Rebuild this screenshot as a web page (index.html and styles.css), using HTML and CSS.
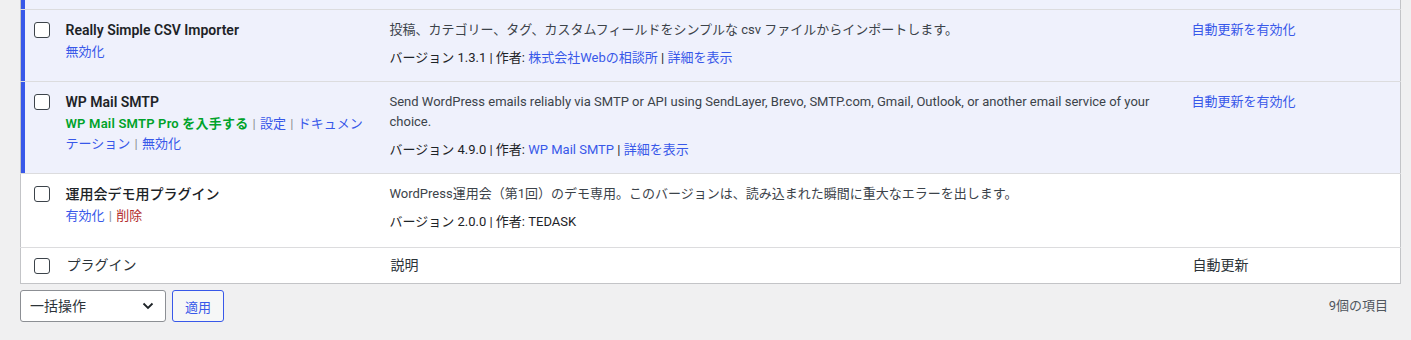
FILE: index.html
```html
<!DOCTYPE html>
<html lang="ja">
<head>
    <meta charset="UTF-8">
    <meta name="viewport" content="width=device-width, initial-scale=1.0">
    <title>プラグイン</title>
    <link rel="stylesheet" href="styles.css">
</head>
<body>
    <div class="wrap">
        <table class="plugins">
            <colgroup>
                <col class="col-check">
                <col class="col-name">
                <col>
                <col class="col-auto">
            </colgroup>
            <tbody>
                <tr class="active spacer">
                    <th class="check-column"></th>
                    <td></td>
                    <td></td>
                    <td></td>
                </tr>
                <tr class="active">
                    <th class="check-column"><span class="checkbox"></span></th>
                    <td class="plugin-title">
                        <strong>Really Simple CSV Importer</strong>
                        <div class="row-actions"><a href="#">無効化</a></div>
                    </td>
                    <td class="column-description">
                        <p class="desc">投稿、カテゴリー、タグ、カスタムフィールドをシンプルな csv ファイルからインポートします。</p>
                        <p class="meta">バージョン 1.3.1 | 作者: <a href="#">株式会社Webの相談所</a> | <a href="#">詳細を表示</a></p>
                    </td>
                    <td class="column-auto-updates"><a href="#">自動更新を有効化</a></td>
                </tr>
                <tr class="active">
                    <th class="check-column"><span class="checkbox"></span></th>
                    <td class="plugin-title">
                        <strong>WP Mail SMTP</strong>
                        <div class="row-actions"><a href="#" class="get-pro">WP Mail SMTP Pro を入手する</a> <span class="sep">|</span> <a href="#">設定</a> <span class="sep">|</span> <a href="#">ドキュメンテーション</a> <span class="sep">|</span> <a href="#">無効化</a></div>
                    </td>
                    <td class="column-description">
                        <p class="desc">Send WordPress emails reliably via SMTP or API using SendLayer, Brevo, SMTP.com, Gmail, Outlook, or another email service of your choice.</p>
                        <p class="meta">バージョン 4.9.0 | 作者: <a href="#">WP Mail SMTP</a> | <a href="#">詳細を表示</a></p>
                    </td>
                    <td class="column-auto-updates"><a href="#">自動更新を有効化</a></td>
                </tr>
                <tr class="inactive">
                    <th class="check-column"><span class="checkbox"></span></th>
                    <td class="plugin-title">
                        <strong class="title-ja">運用会デモ用プラグイン</strong>
                        <div class="row-actions"><a href="#">有効化</a> <span class="sep">|</span> <a href="#" class="delete">削除</a></div>
                    </td>
                    <td class="column-description">
                        <p class="desc">WordPress運用会（第1回）のデモ専用。このバージョンは、読み込まれた瞬間に重大なエラーを出します。</p>
                        <p class="meta">バージョン 2.0.0 | 作者: TEDASK</p>
                    </td>
                    <td class="column-auto-updates"></td>
                </tr>
            </tbody>
            <tfoot>
                <tr>
                    <th class="check-column"><span class="checkbox"></span></th>
                    <th>プラグイン</th>
                    <th>説明</th>
                    <th>自動更新</th>
                </tr>
            </tfoot>
        </table>

        <div class="tablenav">
            <div class="bulkactions">
                <div class="select-wrap">
                    <select class="bulk-select">
                        <option>一括操作</option>
                    </select>
                    <svg class="chevron" width="12" height="8" viewBox="0 0 12 8"><path d="M1.5 1.5 L6 6 L10.5 1.5" fill="none" stroke="#1d2327" stroke-width="1.8"/></svg>
                </div>
                <button class="button">適用</button>
            </div>
            <span class="displaying-num">9個の項目</span>
        </div>
    </div>
</body>
</html>
```

FILE: styles.css
```css
body {
    margin: 0;
    background-color: #f0f0f1;
    color: #3c434a;
    font-family: Roboto, "Noto Sans CJK JP", sans-serif;
    font-size: 13px;
    line-height: 20px;
}

.wrap {
    padding: 0 10px 0 20px;
}

a {
    color: #3858e9;
    text-decoration: none;
}

.plugins {
    width: 100%;
    border-collapse: collapse;
    border: 1px solid #c3c4c7;
    border-top: none;
    background-color: #fff;
    table-layout: fixed;
}

.col-check {
    width: 35px;
}

.col-name {
    width: 324px;
}

.col-auto {
    width: 219px;
}

.plugins th,
.plugins td {
    text-align: left;
    vertical-align: top;
    padding: 10px 10px 13px;
}

.plugins tbody tr {
    border-bottom: 1px solid #dcdcde;
}

.plugins tr.active th,
.plugins tr.active td {
    background-color: #eff1fc;
}

.plugins tr.active .check-column {
    box-shadow: inset 4px 0 0 #3858e9;
}

.plugins tr.inactive td {
    padding-bottom: 15px;
}

.check-column {
    padding: 12px 0 0 13px !important;
}

.plugins tr.spacer th,
.plugins tr.spacer td {
    padding: 0 !important;
    height: 9px;
}

.checkbox {
    display: block;
    width: 14px;
    height: 14px;
    border: 1px solid #3c434a;
    border-radius: 3px;
    background-color: #fff;
}

.plugin-title strong {
    display: block;
    font-size: 14px;
    font-weight: 600;
    color: #1d2327;
    line-height: 20px;
}

.plugin-title .title-ja {
    font-weight: 500;
}

.row-actions {
    margin-top: 2px;
}

.row-actions .sep {
    color: #8c8f94;
    margin: 0 1px;
}

.row-actions .get-pro {
    color: #00a32a;
    font-weight: 600;
    letter-spacing: 0.2px;
}

.row-actions .delete {
    color: #b32d2e;
}

.column-description p {
    margin: 0;
}

.column-description .meta {
    margin-top: 8px;
    color: #1d2327;
}

.plugins tfoot tr {
    border-top: 1px solid #c3c4c7;
}

.plugins tfoot th {
    font-weight: 400;
    font-size: 14px;
    color: #2c3338;
    padding: 7px 10px 8px 11px;
}

.plugins tfoot .check-column {
    padding: 10px 0 0 13px !important;
}

.tablenav {
    display: flex;
    justify-content: space-between;
    align-items: center;
    padding: 6px 13px 0 0;
}

.bulkactions {
    display: flex;
    gap: 6px;
}

.select-wrap {
    position: relative;
}

.bulk-select {
    appearance: none;
    width: 146px;
    height: 32px;
    padding: 0 24px 0 9px;
    border: 1px solid #8c8f94;
    border-radius: 3px;
    background-color: #fff;
    color: #2c3338;
    font-family: inherit;
    font-size: 14px;
}

.chevron {
    position: absolute;
    right: 12px;
    top: 12px;
}

.button {
    height: 32px;
    padding: 0 12px;
    border: 1px solid #3858e9;
    border-radius: 3px;
    background-color: #f6f7f7;
    color: #3858e9;
    font-family: inherit;
    font-size: 13px;
}

.displaying-num {
    color: #50575e;
    font-size: 13px;
}
```
